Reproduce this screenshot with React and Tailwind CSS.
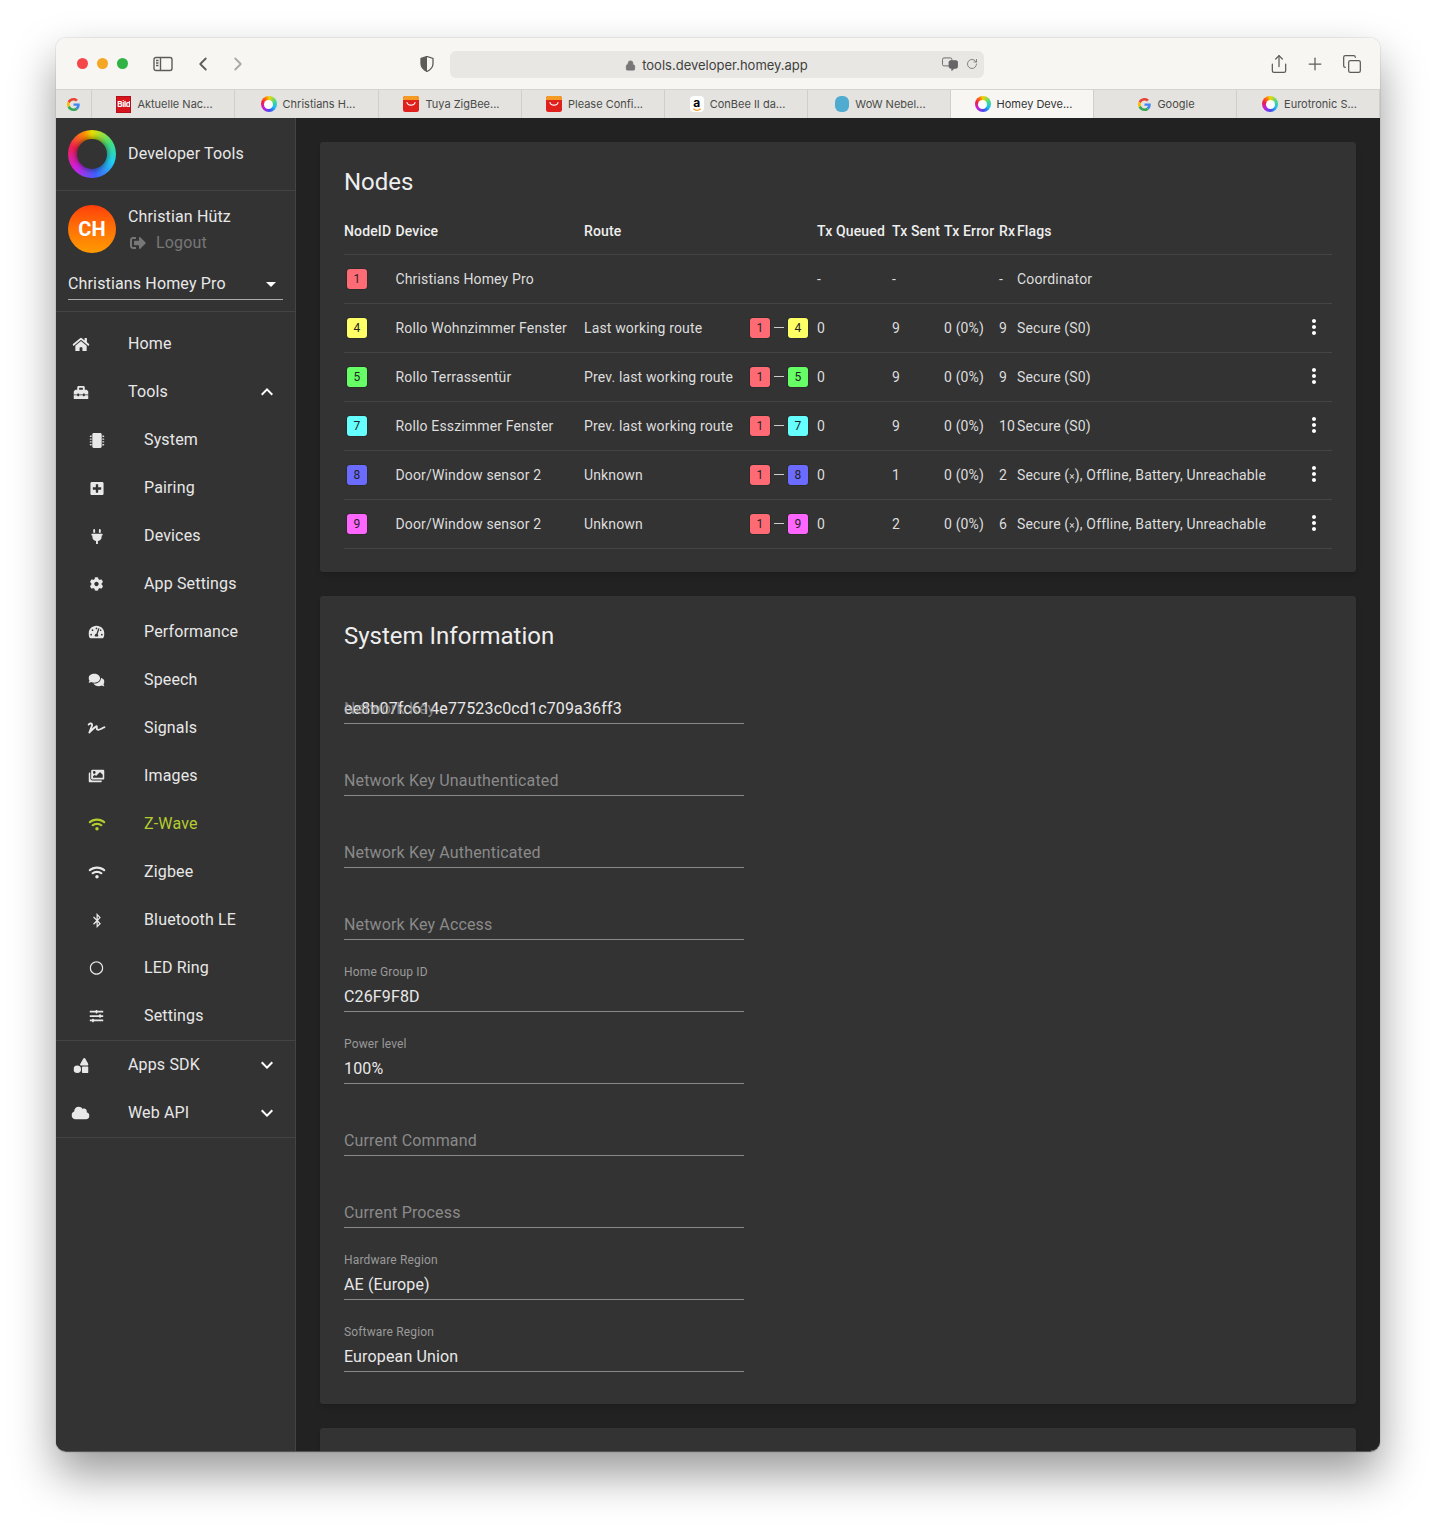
import React from "react";
import { ChevronLeft, ChevronRight, Copy, Lock, Plus, RotateCw, Share } from "lucide-react";
import {
  FaBluetoothB, FaCloud, FaCog, FaComments, FaHome, FaImages, FaMicrochip, FaPlug, FaPlusSquare,
  FaRegCircle, FaShapes, FaSignature, FaSignOutAlt, FaSlidersH, FaTachometerAlt, FaToolbox, FaWifi,
} from "react-icons/fa";
import { MdArrowDropDown, MdExpandLess, MdExpandMore, MdMoreVert } from "react-icons/md";

const chipColors = {
  1: "bg-[#ff6b75]",
  4: "bg-[#ffff66]",
  5: "bg-[#66ff66]",
  7: "bg-[#66ffff]",
  8: "bg-[#6b6bff]",
  9: "bg-[#ff66ff]",
};

const nodes = [
  { id: 1, device: "Christians Homey Pro", route: "", queued: "-", sent: "-", error: "", rx: "-", flags: "Coordinator" },
  { id: 4, device: "Rollo Wohnzimmer Fenster", route: "Last working route", queued: "0", sent: "9", error: "0 (0%)", rx: "9", flags: "Secure (S0)" },
  { id: 5, device: "Rollo Terrassentür", route: "Prev. last working route", queued: "0", sent: "9", error: "0 (0%)", rx: "9", flags: "Secure (S0)" },
  { id: 7, device: "Rollo Esszimmer Fenster", route: "Prev. last working route", queued: "0", sent: "9", error: "0 (0%)", rx: "10", flags: "Secure (S0)" },
  { id: 8, device: "Door/Window sensor 2", route: "Unknown", queued: "0", sent: "1", error: "0 (0%)", rx: "2", flags: "x" },
  { id: 9, device: "Door/Window sensor 2", route: "Unknown", queued: "0", sent: "2", error: "0 (0%)", rx: "6", flags: "x" },
];

const subItems = [
  { label: "System", icon: FaMicrochip, size: 15 },
  { label: "Pairing", icon: FaPlusSquare, size: 15 },
  { label: "Devices", icon: FaPlug, size: 15 },
  { label: "App Settings", icon: FaCog, size: 14 },
  { label: "Performance", icon: FaTachometerAlt, size: 16 },
  { label: "Speech", icon: FaComments, size: 16 },
  { label: "Signals", icon: FaSignature, size: 18 },
  { label: "Images", icon: FaImages, size: 16 },
  { label: "Z-Wave", icon: FaWifi, size: 17, active: true },
  { label: "Zigbee", icon: FaWifi, size: 17 },
  { label: "Bluetooth LE", icon: FaBluetoothB, size: 15 },
  { label: "LED Ring", icon: FaRegCircle, size: 14 },
  { label: "Settings", icon: FaSlidersH, size: 14 },
];

const fields = [
  { value: "ee8b07fc614e77523c0cd1c709a36ff3", ghost: "Network Key" },
  { placeholder: "Network Key Unauthenticated" },
  { placeholder: "Network Key Authenticated" },
  { placeholder: "Network Key Access" },
  { label: "Home Group ID", value: "C26F9F8D" },
  { label: "Power level", value: "100%" },
  { placeholder: "Current Command" },
  { placeholder: "Current Process" },
  { label: "Hardware Region", value: "AE (Europe)" },
  { label: "Software Region", value: "European Union" },
];

const rowGrid = "grid grid-cols-[51.5px_188.5px_166px_67px_75px_52px_55px_18px_1fr_36px] items-center h-[49px] border-b border-[#444] text-sm";

const GoogleIcon = () => (
  <svg viewBox="0 0 48 48" className="w-[13px] h-[13px]">
    <path fill="#EA4335" d="M24 9.5c3.5 0 6.7 1.2 9.2 3.6l6.9-6.9C35.9 2.4 30.5 0 24 0 14.6 0 6.5 5.4 2.6 13.2l8 6.2C12.5 13.7 17.800 9.500 24 9.500z" />
    <path fill="#4285F4" d="M46.900 24.500c0-1.600-.100-3.100-.400-4.500H24v9h12.900c-.600 3-2.200 5.500-4.700 7.200l7.700 6c4.500-4.200 7-10.300 7-17.700z" />
    <path fill="#FBBC05" d="M10.600 28.600c-.500-1.400-.800-3-.800-4.600s.300-3.200.800-4.600l-8-6.200C.900 16.500 0 20.100 0 24s.900 7.500 2.600 10.800l8-6.200z" />
    <path fill="#34A853" d="M24 48c6.500 0 11.900-2.100 15.900-5.800l-7.700-6c-2.200 1.500-4.900 2.300-8.200 2.300-6.200 0-11.500-4.200-13.400-9.900l-8 6.200C6.500 42.600 14.600 48 24 48z" />
  </svg>
);

const TabRing = () => (
  <div className="w-4 h-4 rounded-full flex items-center justify-center bg-[conic-gradient(#f0d800,#40d890_70deg,#20c0f0_120deg,#3c50f0_170deg,#c020e0_230deg,#f02040_290deg,#ff9000_340deg,#f0d800)]">
    <div className="w-[9px] h-[9px] rounded-full bg-white" />
  </div>
);

const AliIcon = () => (
  <svg viewBox="0 0 16 16" className="w-4 h-4">
    <rect width="16" height="16" rx="2.500" fill="#e0201c" />
    <path d="M0 2.500A2.500 2.500 0 0 1 2.500 0h11A2.500 2.500 0 0 1 16 2.500V4H0z" fill="#f59a23" />
    <path d="M4 6.500c.500 3.500 7.500 3.500 8 0" fill="none" stroke="#fff" strokeWidth="1.200" strokeLinecap="round" />
  </svg>
);

const BildIcon = () => (
  <div className="w-[15px] h-[17px] bg-[#d8141c] flex items-center justify-center overflow-hidden border border-[#b01018]">
    <span className="text-[8px] leading-none font-bold text-white tracking-tighter">Bild</span>
  </div>
);

const AmazonIcon = () => (
  <div className="w-[14px] h-4 bg-white rounded-sm flex flex-col items-center justify-center">
    <span className="text-[12px] leading-[11px] font-bold text-black">a</span>
    <svg viewBox="0 0 12 4" className="w-[10px] h-[3px]">
      <path d="M1 1c3 2.500 7 2.500 10 0" fill="none" stroke="#f59a23" strokeWidth="1.500" />
    </svg>
  </div>
);

const BlobIcon = () => <div className="w-[14px] h-4 rounded-[6px] bg-[#4fabd0]" />;

const tabs = [
  { w: "w-[143px]", icon: BildIcon, label: "Aktuelle Nac..." },
  { w: "w-[144px]", icon: TabRing, label: "Christians H..." },
  { w: "w-[143px]", icon: AliIcon, label: "Tuya ZigBee..." },
  { w: "w-[143px]", icon: AliIcon, label: "Please Confi..." },
  { w: "w-[143px]", icon: AmazonIcon, label: "ConBee II da..." },
  { w: "w-[143px]", icon: BlobIcon, label: "WoW Nebel..." },
  { w: "w-[143px]", icon: TabRing, label: "Homey Deve...", active: true },
  { w: "w-[143px]", icon: GoogleIcon, label: "Google" },
  { w: "w-[143px]", icon: TabRing, label: "Eurotronic S..." },
];

const Toolbar = () => (
  <div className="h-[52px] bg-[#f7f6f3] flex items-center text-[#5c5c5a] font-['Inter',sans-serif] tracking-normal border-b border-[#d4d3cf]">
    <div className="flex gap-[9px] ml-[21px]">
      <div className="w-[11px] h-[11px] rounded-full bg-[#f4474a]" />
      <div className="w-[11px] h-[11px] rounded-full bg-[#f5a623]" />
      <div className="w-[11px] h-[11px] rounded-full bg-[#2fb344]" />
    </div>
    <svg viewBox="0 0 20 16" className="w-[20px] h-4 ml-[25px]" fill="none" stroke="#5c5c5a" strokeWidth="1.400">
      <rect x="1" y="1.500" width="18" height="13" rx="2" />
      <path d="M7.500 1.500v13M3 4.500h2.500M3 7h2.500M3 9.500h2.500" />
    </svg>
    <ChevronLeft size={22} strokeWidth={2} className="ml-[19px]" />
    <ChevronRight size={22} strokeWidth={2} className="ml-[13px] text-[#a8a8a6]" />
    <svg viewBox="0 0 14 16" className="w-[14px] h-4 ml-[171px]">
      <path d="M7 .500 1 2.500v5c0 4 3 6.500 6 8 3-1.500 6-4 6-8v-5z" fill="none" stroke="#5c5c5a" strokeWidth="1.300" />
      <path d="M7 .500 1 2.500v5c0 4 3 6.500 6 8z" fill="#5c5c5a" />
    </svg>
    <div className="ml-[16px] mt-[1px] w-[534px] h-[27px] rounded-md bg-[#e8e7e3] flex items-center">
      <div className="flex-1 flex items-center justify-center gap-[6px] pl-[42px] pt-[3px] text-[13px] text-[#3f3f3e]">
        <Lock size={11} fill="#777" stroke="#777" />
        <span>tools.developer.homey.app</span>
      </div>
      <svg viewBox="0 0 18 15" className="w-[18px] h-[14px]" fill="none" stroke="#666" strokeWidth="1">
        <rect x="1" y="1" width="10" height="8.500" rx="1.500" />
        <rect x="8" y="4" width="9" height="8" rx="1.500" fill="#666" />
        <path d="M11 12v2.500l2.500-2.500" fill="#666" />
      </svg>
      <RotateCw size={12} strokeWidth={1.500} className="ml-[7px] mr-[6px] text-[#666]" />
    </div>
    <Share size={20} strokeWidth={1.500} className="ml-[285px]" />
    <Plus size={20} strokeWidth={1.500} className="ml-[16px]" />
    <Copy size={20} strokeWidth={1.500} className="ml-[17px]" />
  </div>
);

const TabBar = () => (
  <div className="h-7 flex bg-[#e4e3df] text-[11px] tracking-normal text-[#4a4a48] font-['Inter',sans-serif]">
    <div className="w-9 flex items-center justify-center border-r border-[#d0cfcb]">
      <GoogleIcon />
    </div>
    {tabs.map((tab) => {
      const Icon = tab.icon;
      return (
        <div
          key={tab.label}
          className={`${tab.w} flex items-center justify-center gap-[6px] pl-[3px] border-r border-[#d0cfcb] ${tab.active ? "bg-[#f7f6f3] text-[#333]" : ""}`}
        >
          <Icon />
          <span className="pt-[1px]">{tab.label}</span>
        </div>
      );
    })}
  </div>
);

const NavRow = ({ icon: Icon, label, sub, active, size = 16, chevron: Chevron }) => (
  <div className={`h-12 flex items-center ${sub ? "pl-8" : "pl-4"} pr-4 text-base ${active ? "text-[#b5cc2e]" : "text-[#e8e8e8]"}`}>
    <div className="w-[18px] flex justify-center -translate-x-[0.5px]">
      <Icon size={size} />
    </div>
    <span className="ml-[38px] flex-1">{label}</span>
    {Chevron && <Chevron size={24} className="text-white" />}
  </div>
);

const Sidebar = () => (
  <aside className="w-60 shrink-0 bg-[#333] border-r border-[#444] text-[#e8e8e8] text-base">
    <div className="h-[73px] border-b border-[#444] flex items-center px-3">
      <div className="w-12 h-12 rounded-full flex items-center justify-center bg-[conic-gradient(#e8e000,#40e080_60deg,#20d0f0_110deg,#4060ff_170deg,#d020e0_230deg,#f02050_290deg,#ff9000_340deg,#e8e000)]">
        <div className="w-[30px] h-[30px] rounded-full bg-[#333] shadow-[0_0_4px_2px_rgba(0,0,0,0.35)]" />
      </div>
      <span className="ml-3">Developer Tools</span>
    </div>
    <div className="h-[121px] border-b border-[#444] px-3 pt-[14px]">
      <div className="flex">
        <div className="w-12 h-12 rounded-full bg-gradient-to-b from-[#ff3d0a] to-[#ff9a00] flex items-center justify-center text-xl font-bold text-white">
          CH
        </div>
        <div className="ml-3">
          <div className="leading-6">Christian Hütz</div>
          <div className="mt-[2px] flex items-center h-6 text-[#777]">
            <FaSignOutAlt size={16} className="ml-[2px]" />
            <span className="ml-[10px]">Logout</span>
          </div>
        </div>
      </div>
      <div className="mt-[17px] h-[28px] flex items-center justify-between border-b border-[#aaa] pb-[4px]">
        <span className="leading-6">Christians Homey Pro</span>
        <MdArrowDropDown size={24} className="text-white" />
      </div>
    </div>
    <div className="pt-2 border-b border-[#444]">
      <NavRow icon={FaHome} size={17} label="Home" />
      <NavRow icon={FaToolbox} size={15} label="Tools" chevron={MdExpandLess} />
      {subItems.map((item) => (
        <NavRow key={item.label} icon={item.icon} size={item.size} label={item.label} active={item.active} sub />
      ))}
    </div>
    <div className="border-b border-[#444]">
      <NavRow icon={FaShapes} size={15} label="Apps SDK" chevron={MdExpandMore} />
      <NavRow icon={FaCloud} size={18} label="Web API" chevron={MdExpandMore} />
    </div>
  </aside>
);

const Chip = ({ id }) => (
  <div className={`w-5 h-5 rounded-[3px] ${chipColors[id]} flex items-center justify-center text-xs text-[#222] shadow-[0_0_0_1px_rgba(0,0,0,0.12)]`}>
    {id}
  </div>
);

const Flags = ({ value }) =>
  value === "x" ? (
    <span>
      Secure (<span className="text-[10px]">×</span>), Offline, Battery, Unreachable
    </span>
  ) : (
    <span>{value}</span>
  );

const NodesCard = () => (
  <section className="bg-[#333] rounded-[3px] px-6 pt-6 pb-[23px] shadow-md">
    <h2 className="text-2xl leading-8 mb-2 text-[#eee] tracking-normal">Nodes</h2>
    <div className={`${rowGrid} font-medium text-[#eee] pt-[2px]`}>
      <span>NodeID</span>
      <span>Device</span>
      <span>Route</span>
      <span />
      <span>Tx Queued</span>
      <span>Tx Sent</span>
      <span>Tx Error</span>
      <span>Rx</span>
      <span>Flags</span>
      <span />
    </div>
    {nodes.map((node) => (
      <div key={node.id} className={`${rowGrid} text-[#ddd]`}>
        <div className="pl-[3px]">
          <Chip id={node.id} />
        </div>
        <span>{node.device}</span>
        <span>{node.route}</span>
        <div>
          {node.route && (
            <div className="flex items-center">
              <Chip id={1} />
              <div className="w-[10px] h-px bg-[#ccc] mx-1 -translate-y-px" />
              <Chip id={node.id} />
            </div>
          )}
        </div>
        <span>{node.queued}</span>
        <span>{node.sent}</span>
        <span>{node.error}</span>
        <span>{node.rx}</span>
        <Flags value={node.flags} />
        <div className="flex justify-center -translate-y-px">
          {node.route && <MdMoreVert size={24} className="text-white" />}
        </div>
      </div>
    ))}
  </section>
);

const Field = ({ label, value, placeholder, ghost }) => (
  <div className="h-[72px] w-[400px] flex flex-col justify-end">
    {label && <div className="text-xs leading-4 mb-[4px] text-[#9a9a9a]">{label}</div>}
    <div className="relative h-7 pt-[1px] leading-6 border-b border-[#888] text-base">
      {value && <span className="text-[#e8e8e8]">{value}</span>}
      {ghost && <span className="absolute left-0 top-[1px] text-[#a0a0a0] opacity-70">{ghost}</span>}
      {placeholder && <span className="text-[#8a8a8a]">{placeholder}</span>}
    </div>
  </div>
);

const SystemCard = () => (
  <section className="bg-[#333] rounded-[3px] pt-6 px-6 pb-8 shadow-md">
    <h2 className="text-2xl leading-8 text-[#eee] tracking-normal">System Information</h2>
    {fields.map((field) => (
      <Field key={field.label || field.placeholder || field.ghost} {...field} />
    ))}
  </section>
);

export default function App() {
  return (
    <div className="bg-white h-[1527px] pt-[38px] px-14 font-['Roboto',sans-serif] tracking-[0.15px] overflow-hidden">
      <div className="h-[1414px] rounded-[10px] overflow-hidden flex flex-col border-b border-[#555] shadow-[0_0_0_1px_rgba(0,0,0,0.06),0_22px_45px_rgba(0,0,0,0.4)]">
        <Toolbar />
        <TabBar />
        <div className="flex-1 flex min-h-0 bg-[#222]">
          <Sidebar />
          <main className="flex-1 min-w-0 p-6 flex flex-col gap-6 overflow-hidden">
            <NodesCard />
            <SystemCard />
            <section className="bg-[#333] rounded-[3px] h-[100px] shrink-0 shadow-md" />
          </main>
        </div>
      </div>
    </div>
  );
}
